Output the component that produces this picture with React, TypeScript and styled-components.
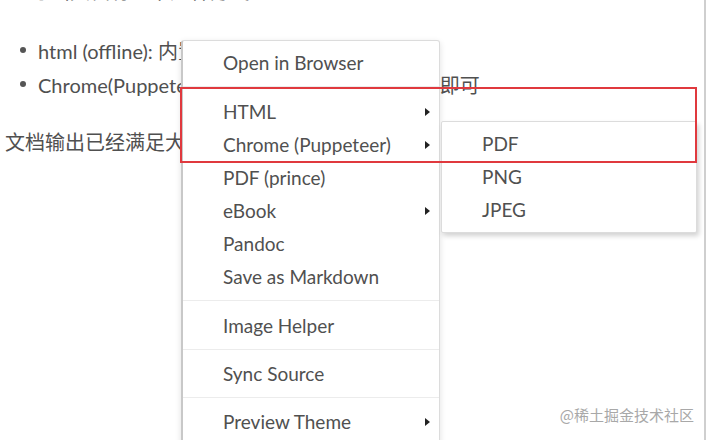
import React from "react";
import styled, { createGlobalStyle } from "styled-components";

const Global = createGlobalStyle`
  html, body { margin: 0; padding: 0; background: #fff; }
  body { width: 708px; height: 440px; overflow: hidden; }
`;

const Page = styled.div`
  display: flex;
  width: 708px;
  height: 440px;
  overflow: hidden;
  background: #fff;
`;

const Content = styled.div`
  position: relative;
  flex: 1;
  padding-left: 5px;
  font-family: Lato, "Noto Sans CJK SC", sans-serif;
  color: #505050;
`;

const ScrollTrack = styled.div`
  width: 2px;
  margin-right: 2px;
  background: #cfcfcf;
`;

const TopLine = styled.p`
  margin: -21px 0 0 25px;
  font-size: 20px;
  line-height: 24px;
  white-space: nowrap;
`;

const List = styled.div`
  display: flex;
  flex-direction: column;
  margin-top: 30px;
`;

const Bullet = styled.div`
  display: flex;
  align-items: center;
  height: 34px;
  font-size: 20px;
  white-space: nowrap;
`;

const Dot = styled.span`
  flex: none;
  width: 6px;
  height: 6px;
  border-radius: 50%;
  background: #555;
  margin: 0 12px 0 15px;
`;

const Para = styled.p`
  margin: 29px 0 0;
  font-size: 20px;
  line-height: 24px;
  white-space: nowrap;
`;

const Menu = styled.div`
  position: absolute;
  z-index: 1;
  left: 181px;
  top: 40px;
  width: 259px;
  height: 420px;
  background: #fff;
  border: 1px solid #dcdcdc;
  border-left: 2px solid #c8c8c8;
  border-radius: 3px 3px 0 0;
  box-shadow: 0 2px 6px rgba(0, 0, 0, 0.12);
  padding-top: 5px;
  box-sizing: border-box;
  font-family: Lato, "Noto Sans CJK SC", sans-serif;
`;

const Item = styled.div`
  display: flex;
  align-items: center;
  justify-content: space-between;
  height: 33px;
  padding: 0 9px 0 40px;
  font-size: 19px;
  color: #505050;
  white-space: nowrap;
`;

const Arrow = styled.span`
  width: 0;
  height: 0;
  border-top: 4px solid transparent;
  border-bottom: 4px solid transparent;
  border-left: 5px solid #222;
`;

const Sep = styled.div`
  height: 1px;
  margin: 7px 0 ${(p: { $tight?: boolean }) => (p.$tight ? 7 : 8)}px;
  background: #ececec;
`;

const SubMenu = styled.div`
  position: absolute;
  z-index: 2;
  left: 441px;
  top: 121px;
  width: 256px;
  background: #fff;
  border: 1px solid #dcdcdc;
  border-radius: 2px;
  box-shadow: 2px 3px 5px rgba(0, 0, 0, 0.18);
  padding: 5px 0 6px;
  box-sizing: border-box;
  font-family: Lato, "Noto Sans CJK SC", sans-serif;
`;

const Highlight = styled.div`
  position: absolute;
  z-index: 3;
  left: 180px;
  top: 87px;
  width: 517px;
  height: 76px;
  border: 2px solid #e0393e;
  box-sizing: border-box;
`;

const Watermark = styled.div`
  position: absolute;
  z-index: 3;
  right: 10px;
  top: 404px;
  font-family: "Noto Sans CJK SC", sans-serif;
  font-size: 15px;
  color: #a8a8a8;
`;

type Entry = { label: string; sub?: boolean } | { sep: true; tight?: boolean };

const mainItems: Entry[] = [
  { label: "Open in Browser" },
  { sep: true },
  { label: "HTML", sub: true },
  { label: "Chrome (Puppeteer)", sub: true },
  { label: "PDF (prince)" },
  { label: "eBook", sub: true },
  { label: "Pandoc" },
  { label: "Save as Markdown" },
  { sep: true },
  { label: "Image Helper" },
  { sep: true, tight: true },
  { label: "Sync Source" },
  { sep: true, tight: true },
  { label: "Preview Theme", sub: true },
];

export default function App() {
  return (
    <Page>
      <Global />
      <Content>
        <TopLine>导出文档有以下几种方式</TopLine>
        <List>
          <Bullet>
            <Dot />
            html (offline): 内置的导出功能，无需插件
          </Bullet>
          <Bullet>
            <Dot />
            Chrome(Puppeteer): 需要本地安装谷歌浏览器即可
          </Bullet>
        </List>
        <Para>文档输出已经满足大部分的使用需求了。</Para>
        <Menu>
          {mainItems.map((it, i) =>
            "sep" in it ? (
              <Sep key={i} $tight={it.tight} />
            ) : (
              <Item key={i}>
                {it.label}
                {it.sub && <Arrow />}
              </Item>
            )
          )}
        </Menu>
        <SubMenu>
          <Item>PDF</Item>
          <Item>PNG</Item>
          <Item>JPEG</Item>
        </SubMenu>
        <Highlight />
        <Watermark>@稀土掘金技术社区</Watermark>
      </Content>
      <ScrollTrack />
    </Page>
  );
}
